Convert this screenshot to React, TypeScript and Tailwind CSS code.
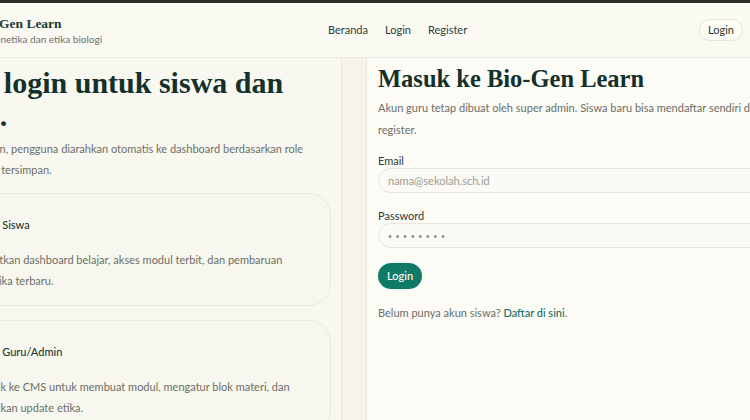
const sans = "font-['Lato','Liberation_Sans',sans-serif]";
const serif = "font-['Liberation_Serif','DejaVu_Serif',serif]";

const roles = [
    {
        title: "Akun Siswa",
        text: "Dapatkan dashboard belajar, akses modul terbit, dan pembaruan bioetika terbaru.",
    },
    {
        title: "Akun Guru/Admin",
        text: "Masuk ke CMS untuk membuat modul, mengatur blok materi, dan terbitkan update etika.",
    },
];

const Header = () => (
    <header className="h-[55px] flex items-center border-b border-[#ebe8dc] bg-[#faf9f2]">
        <div className="-ml-[25px] w-[353px] shrink-0">
            <div className={`${serif} text-[13.5px] font-bold leading-[17px] text-[#1d3a33]`}>Bio-Gen Learn</div>
            <div className="text-[10px] leading-[14px] text-[#6f726b]">Isu genetika dan etika biologi</div>
        </div>
        <nav className="flex gap-[17px] text-[11px] text-[#2f3d38]">
            <a>Beranda</a>
            <a>Login</a>
            <a>Register</a>
        </nav>
        <button className="ml-auto mr-[7px] h-[22px] px-[8px] rounded-full border border-[#e9e6db] bg-[#fdfcf7] text-[11px] text-[#2a3833]">
            Login
        </button>
    </header>
);

const RoleCard = ({ title, text }: { title: string; text: string }) => (
    <div className="rounded-[22px] border border-[#ebe8dd] bg-[#f8f7ef] pl-[29px] pr-[22px] pt-[21px] pb-[14px]">
        <div className="text-[11px] font-medium leading-[20px] text-[#253a34] mb-[14px]">{title}</div>
        <p className="text-[11px] leading-[21px] text-[#6b6e67]">{text}</p>
    </div>
);

export default function App() {
    return (
        <div className={`${sans} w-[750px] h-[420px] overflow-hidden bg-[#f5f3ea]`}>
            <div className="h-[3px] bg-[#2e2c29]" />
            <Header />
            <main className="flex gap-[24px] -ml-[80px] h-[362px]">
                <section className="w-[422px] shrink-0 border-r border-[#ebe8dc] bg-[#f9f8f0] pl-[24px] pr-[10px] pt-[8px]">
                    <h1 className={`${serif} -ml-[6px] text-[30px] font-bold leading-[33px] text-[#14302b]`}>
                        Satu login untuk siswa dan guru.
                    </h1>
                    <p className="mt-[6px] pr-[24px] text-[11px] leading-[21px] text-[#6b6e67]">
                        Setelah login, pengguna diarahkan otomatis ke dashboard berdasarkan role yang sudah tersimpan.
                    </p>
                    <div className="mt-[13px] flex flex-col gap-[14px]">
                        {roles.map((r) => (
                            <RoleCard key={r.title} title={r.title} text={r.text} />
                        ))}
                    </div>
                </section>

                <section className="w-[480px] shrink-0 border-l border-[#ebe8dc] bg-[#fcfbf6] pl-[11px] pr-[20px] pt-[6px]">
                    <h2 className={`${serif} text-[24.5px] font-bold leading-[30px] text-[#14302b]`}>
                        Masuk ke Bio-Gen Learn
                    </h2>
                    <p className="mt-[3px] text-[11px] leading-[22px] text-[#6b6e67]">
                        Akun guru tetap dibuat oleh super admin. Siswa baru bisa mendaftar sendiri di halaman register.
                    </p>
                    <form className="mt-[13px]">
                        <label className="block text-[11px] leading-[14px] text-[#2c3a35]">Email</label>
                        <input
                            placeholder="nama@sekolah.sch.id"
                            className="block w-full h-[25px] rounded-full border border-[#e9e6db] bg-[#fbfaf4] px-[9px] text-[11px] text-[#2c3a35] placeholder:text-[#9c9d96] outline-none"
                        />
                        <label className="block mt-[16px] text-[11px] leading-[14px] text-[#2c3a35]">Password</label>
                        <input
                            placeholder="••••••••"
                            className="block w-full h-[25px] rounded-full border border-[#e9e6db] bg-[#fbfaf4] px-[9px] text-[7px] tracking-[3.5px] placeholder:text-[#8d8e87] outline-none"
                        />
                        <button
                            type="button"
                            className="mt-[15px] h-[26px] px-[9px] rounded-full bg-[#0f7a66] text-[11px] font-medium text-white"
                        >
                            Login
                        </button>
                    </form>
                    <p className="mt-[13px] text-[11px] leading-[22px] text-[#6b6e67]">
                        Belum punya akun siswa? <a className="font-medium text-[#17705e]">Daftar di sini</a>.
                    </p>
                </section>
            </main>
        </div>
    );
}
